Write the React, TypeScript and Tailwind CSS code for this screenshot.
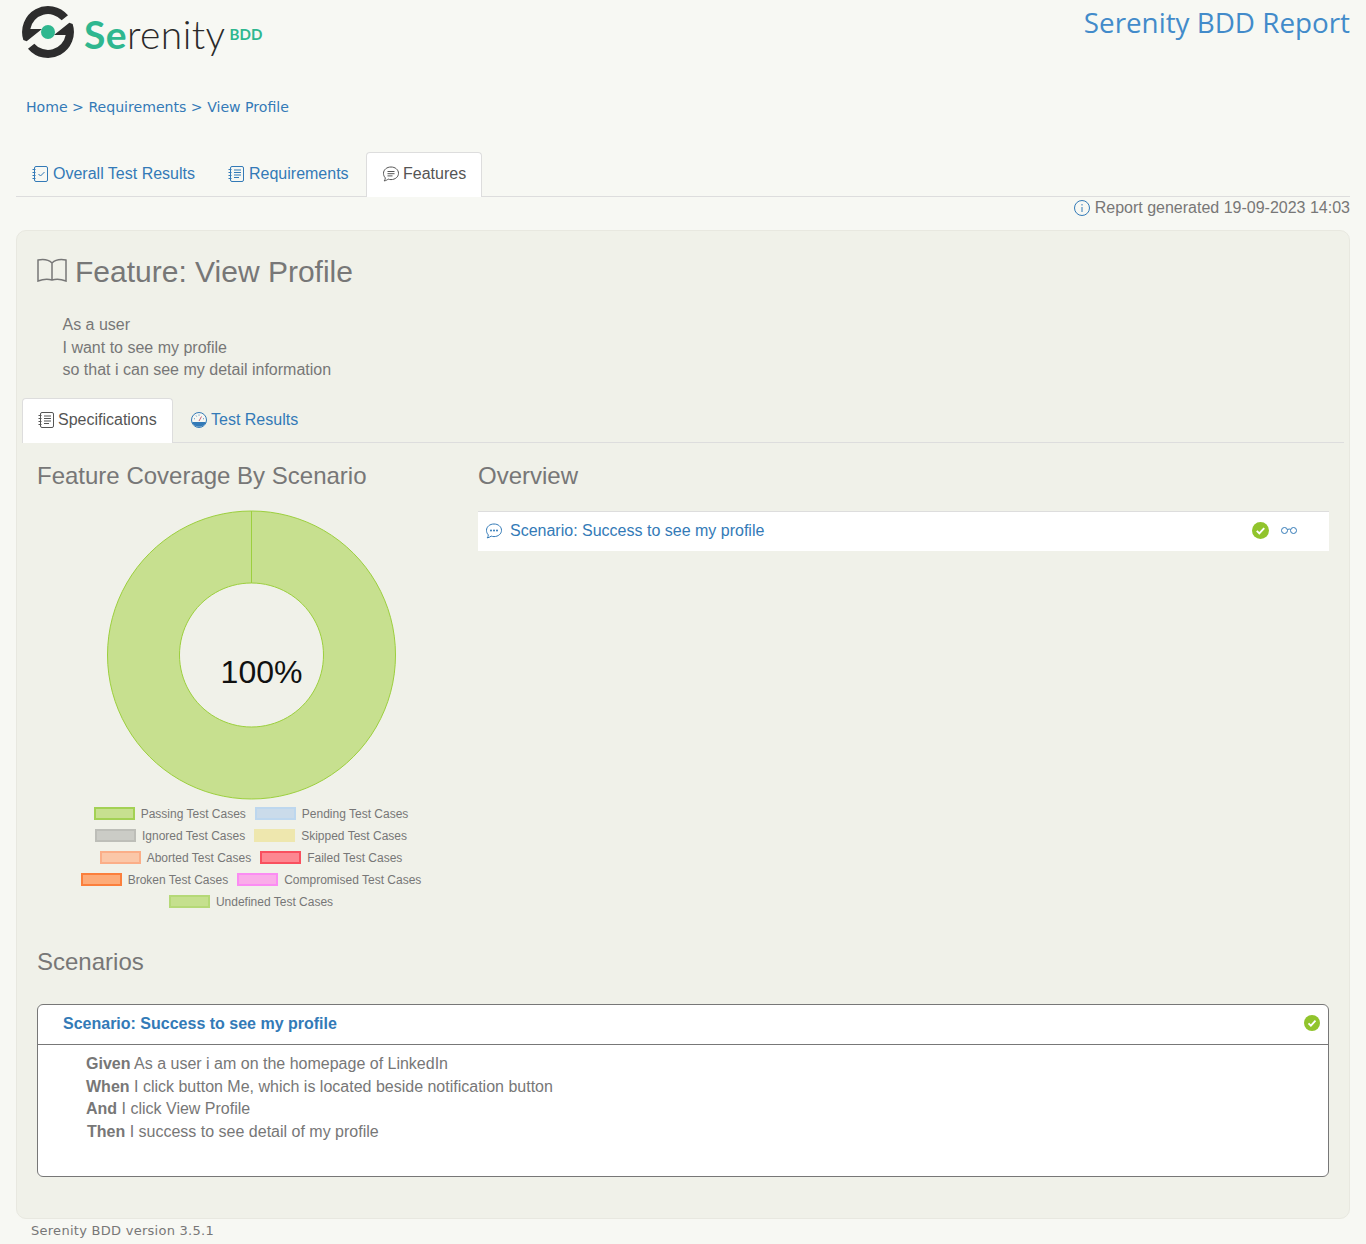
const sans = "font-['Liberation_Sans',Arial,sans-serif]";

function Notebook({ check, className }: { check?: boolean; className: string }) {
  return (
    <svg viewBox="0 0 16 16" className={className} fill="none" stroke="currentColor" strokeWidth="1">
      <rect x="2.5" y="0.5" width="13" height="15" rx="1.5" />
      <path d="M0.5 3.5h3M0.5 6.5h3M0.5 9.5h3M0.5 12.5h3" />
      {check ? <path d="M6.5 8l2 2 4-4" /> : <path d="M6 4h7M6 6.5h7M6 9h7M6 11.5h5" />}
    </svg>
  );
}

function Bubble({ dots, className }: { dots?: boolean; className: string }) {
  return (
    <svg viewBox="0 0 16 16" className={className} fill="none" stroke="currentColor" strokeWidth="1">
      <path d="M8 1c4.200 0 7.500 2.700 7.500 6.300s-3.300 6.300-7.500 6.300c-1 0-2-.2-2.800-.5-1 .8-2.600 1.700-4 1.800.7-.8 1.100-1.900 1.100-3C1 10.500.5 9 .5 7.300.5 3.700 3.800 1 8 1z" />
      {dots ? (
        <g fill="currentColor" stroke="none">
          <circle cx="5" cy="7.500" r="1" />
          <circle cx="8" cy="7.500" r="1" />
          <circle cx="11" cy="7.500" r="1" />
        </g>
      ) : (
        <path d="M4.500 5.500h7M4.500 7.700h7M4.500 9.900h5" />
      )}
    </svg>
  );
}

function CheckBadge({ className }: { className: string }) {
  return (
    <svg viewBox="0 0 16 16" className={className}>
      <circle cx="8" cy="8" r="8" fill="#91c42c" />
      <path d="M4.500 8.300l2.400 2.400 4.600-5" fill="none" stroke="#fff" strokeWidth="1.800" />
    </svg>
  );
}

function Logo() {
  const arc = "M156 46A78 78 0 0 0 22 120L32 124 78 87 43 87A54 54 0 0 1 137 61Z";
  return (
    <div className="flex items-start">
      <svg viewBox="0 0 192 192" className="w-[64px] h-[64px] ml-[16px]" fill="#2d2d2d">
        <path d={arc} />
        <path d={arc} transform="rotate(180 96 96)" />
        <circle cx="96" cy="96" r="21" fill="#2fb78f" />
      </svg>
      <div className="ml-[4px] mt-[10px] font-['Lato',sans-serif] text-[39px] leading-[48px] tracking-[0.420px] text-[#2a2a2a] font-light">
        <span className="text-[#2fb78f] font-bold">Se</span>renity
      </div>
      <div className="ml-[4px] mt-[24px] font-['Lato',sans-serif] text-[15px] leading-[20px] font-bold text-[#2fb78f]">BDD</div>
    </div>
  );
}

const legend: [string, string, string, string, string, string][] = [
  ["bg-[#c7e08f]", "border-[#a3d154]", "Passing Test Cases", "bg-[#cadbea]", "border-[#bdd7ee]", "Pending Test Cases"],
  ["bg-[#cbccc6]", "border-[#bdbeb8]", "Ignored Test Cases", "bg-[#eee7ae]", "border-[#eee7ae]", "Skipped Test Cases"],
  ["bg-[#fbc7a8]", "border-[#fbae88]", "Aborted Test Cases", "bg-[#fd8791]", "border-[#f9505f]", "Failed Test Cases"],
  ["bg-[#fdab78]", "border-[#fb7f3c]", "Broken Test Cases", "bg-[#faace9]", "border-[#fb8cf3]", "Compromised Test Cases"],
];

function Legend({ bg, bd, label }: { bg: string; bd: string; label: string }) {
  return (
    <div className="flex items-center">
      <span className={`w-[41px] h-[13px] border-2 ${bg} ${bd}`} />
      <span className="ml-[6px] text-[12px] leading-[22px] text-[#777]">{label}</span>
    </div>
  );
}

function Donut() {
  return (
    <div className="flex flex-col">
      <svg viewBox="0 0 290 290" className="w-[290px] h-[290px] ml-[84px] mt-[18px]">
        <path
          fillRule="evenodd"
          d="M145.500 1a144 144 0 1 0 0.010 0zM145.500 73a72 72 0 1 1-0.010 0z"
          fill="#c7e08f"
          stroke="#9ccf3e"
        />
        <line x1="145.500" y1="1" x2="145.500" y2="73" stroke="#9ccf3e" />
        <text x="155.500" y="172.500" fontSize="32" textAnchor="middle" fill="#111" fontFamily="Liberation Sans, Arial, sans-serif">
          100%
        </text>
      </svg>
      <div className="w-[429px] ml-[15px] mt-[3px] flex flex-col items-center pr-[1px]">
        {legend.map((r) => (
          <div key={r[2]} className="flex gap-[9px] h-[22px] items-center">
            <Legend bg={r[0]} bd={r[1]} label={r[2]} />
            <Legend bg={r[3]} bd={r[4]} label={r[5]} />
          </div>
        ))}
        <div className="h-[22px] flex items-center">
          <Legend bg="bg-[#c5e08e]" bd="border-[#b5d977]" label="Undefined Test Cases" />
        </div>
      </div>
    </div>
  );
}

export default function App() {
  return (
    <div className={`${sans} w-[1366px] h-[1244px] overflow-hidden bg-[#f7f8f3] text-[#777]`}>
      <div className="flex justify-between h-[62px]">
        <Logo />
        <div className="pr-[16px] pt-[3px] font-['Open_Sans',sans-serif] text-[27.800px] leading-[38px] text-[#428bca]">
          Serenity BDD Report
        </div>
      </div>
      <div className="ml-[26px] mt-[35px] font-['DejaVu_Sans',Verdana,sans-serif] text-[14.100px] leading-[20px] text-[#337ab7]">
        Home &gt; Requirements &gt; View Profile
      </div>

      <div className="mx-[16px] mt-[35px] h-[45px] border-b border-[#ddd] flex text-[16px]">
        <a className="flex items-center h-[44px] pl-[16px] w-[196px] text-[#337ab7]">
          <Notebook check className="w-[16px] h-[16px] mr-[5px]" />
          Overall Test Results
        </a>
        <a className="flex items-center h-[44px] pl-[16px] w-[154px] text-[#337ab7]">
          <Notebook className="w-[16px] h-[16px] mr-[5px]" />
          Requirements
        </a>
        <a className="flex items-center h-[45px] pb-[2px] pl-[16px] w-[116px] bg-white border border-b-0 border-[#ddd] rounded-t-[4px] text-[#555]">
          <Bubble className="w-[16px] h-[16px] mr-[4px]" />
          Features
        </a>
      </div>

      <div className="mx-[16px] h-[33px] flex justify-end items-start text-[16px] leading-[22px] text-[#777]">
        <svg viewBox="0 0 16 16" className="w-[16px] h-[16px] mr-[5px] mt-[3px] text-[#337ab7]" fill="none" stroke="currentColor">
          <circle cx="8" cy="8" r="7.500" />
          <path d="M8 7v5M8 4v1.500" />
        </svg>
        Report generated 19-09-2023 14:03
      </div>

      <div className="mx-[16px] h-[989px] border border-[#e8e8e0] rounded-[10px] bg-[#f0f1e9] px-[5px]">
        <div className="flex items-center pl-[15px] pt-[22px] h-[62px]">
          <svg viewBox="0 0 30 24" className="w-[30px] h-[24px] mr-[8px] mb-[6px]" fill="none" stroke="#777" strokeWidth="1.500">
            <path d="M15 5C12 2 6 1 1 2V23C6 21 12 21 15 22 18 21 24 21 29 23V2C24 1 18 2 15 5zM15 5V22" />
          </svg>
          <h1 className="text-[30px] leading-[38px] text-[#777] mb-[2px]">Feature: View Profile</h1>
        </div>
        <div className="pl-[40.500px] mt-[21px] text-[16px] leading-[22.500px] text-[#777]">
          <div>As a user</div>
          <div>I want to see my profile</div>
          <div>so that i can see my detail information</div>
        </div>

        <div className="mt-[16px] h-[45px] border-b border-[#ddd] flex text-[16px]">
          <a className="flex items-center h-[45px] pb-[2px] pl-[15px] w-[151px] bg-white border border-b-0 border-[#ddd] rounded-t-[4px] text-[#555]">
            <Notebook className="w-[16px] h-[16px] mr-[4px]" />
            Specifications
          </a>
          <a className="flex items-center h-[44px] pl-[18px] text-[#337ab7]">
            <svg viewBox="0 0 16 16" className="w-[16px] h-[16px] mr-[4px]">
              <circle cx="8" cy="8" r="7.500" fill="#f7f8f3" stroke="#337ab7" />
              <path d="M1 10h14a7.500 7.500 0 0 1-14 0z" fill="#337ab7" />
              <path d="M8 9L10.500 4.500" stroke="#c0607a" />
              <path d="M3 6.500l1 .5M5 3.500l.6 1M8 2.500v1.200M13 6.500l-1 .5" stroke="#337ab7" strokeWidth="0.800" />
            </svg>
            Test Results
          </a>
        </div>

        <div className="flex">
          <div className="w-[456px] shrink-0">
            <h2 className="mt-[17px] pl-[15px] text-[24px] leading-[32px] text-[#777]">Feature Coverage By Scenario</h2>
            <Donut />
          </div>
          <div className="w-[851px]">
            <h2 className="mt-[17px] text-[24px] leading-[32px] text-[#777]">Overview</h2>
            <div className="mt-[19px] h-[40px] bg-white border-t border-[#ddd] flex items-center text-[16px] text-[#337ab7]">
              <Bubble dots className="w-[16px] h-[16px] ml-[8px] mr-[8px]" />
              <span className="flex-1">Scenario: Success to see my profile</span>
              <CheckBadge className="w-[17px] h-[17px] mr-[12px] mb-[2px]" />
              <svg viewBox="0 0 16 8" className="w-[16px] h-[8px] mr-[32px] mb-[2px]" fill="none" stroke="#337ab7" strokeWidth="1">
                <circle cx="3.500" cy="4.500" r="3" />
                <circle cx="12.500" cy="4.500" r="3" />
                <path d="M6.500 3.500q2-1 3 0" />
              </svg>
            </div>
          </div>
        </div>

        <h2 className="mt-[33px] pl-[15px] text-[24px] leading-[32px] text-[#777]">Scenarios</h2>

        <div className="ml-[15px] mr-[15px] mt-[26px] h-[173px] bg-white border border-[#777] rounded-[6px]">
          <div className="h-[40px] border-b border-[#777] flex items-center justify-between pl-[25px] pr-[8px] text-[16px] font-bold text-[#337ab7]">
            Scenario: Success to see my profile
            <CheckBadge className="w-[16px] h-[16px] mb-[2px]" />
          </div>
          <div className="pl-[48px] pt-[8.700px] text-[16px] leading-[22.500px] text-[#777]">
            <div><b>Given</b> As a user i am on the homepage of LinkedIn</div>
            <div><b>When</b> I click button Me, which is located beside notification button</div>
            <div><b>And</b> I click View Profile</div>
            <div className="pl-px"><b>Then</b> I success to see detail of my profile</div>
          </div>
        </div>
      </div>

      <div className="ml-[31px] mt-[3px] font-['DejaVu_Sans',Verdana,sans-serif] text-[13px] tracking-[0.270px] leading-[18px] text-[#777]">
        Serenity BDD version 3.5.1
      </div>
    </div>
  );
}
